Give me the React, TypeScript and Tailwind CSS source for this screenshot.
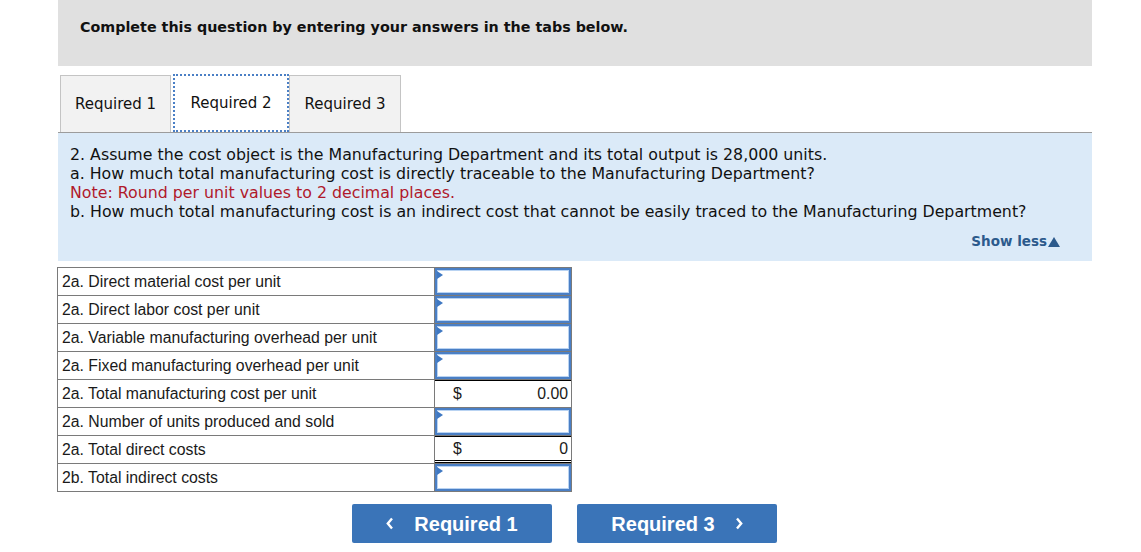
import React from "react";

const tahoma = "font-['DejaVu_Sans',Verdana,sans-serif]";

type Row = { label: string; total?: string; kind?: "single" | "double" };

const rows: Row[] = [
  { label: "2a. Direct material cost per unit" },
  { label: "2a. Direct labor cost per unit" },
  { label: "2a. Variable manufacturing overhead per unit" },
  { label: "2a. Fixed manufacturing overhead per unit" },
  { label: "2a. Total manufacturing cost per unit", total: "0.00", kind: "single" },
  { label: "2a. Number of units produced and sold" },
  { label: "2a. Total direct costs", total: "0", kind: "double" },
  { label: "2b. Total indirect costs" },
];

function InputCell() {
  return (
    <div className="relative h-full w-full border-2 border-[#4a7fc5] bg-white shadow-[inset_0_0_0_1px_#b9d3f2]">
      <svg className="absolute left-0 top-[1px]" width="6" height="8" viewBox="0 0 6 8">
        <path d="M0 0 L6 4 L0 8 Z" fill="#3f78c2" />
      </svg>
    </div>
  );
}

function App() {
  return (
    <div className="w-[1141px] h-[552px] bg-white overflow-hidden">
      <div className="ml-[58px] w-[1034px]">
        <div className={`h-[66px] bg-[#e0e0e0] pl-[22px] pt-[17px] text-[14.3px] font-bold text-[#111] ${tahoma}`}>
          Complete this question by entering your answers in the tabs below.
        </div>

        <div className={`mt-[8px] flex items-end pl-[2px] text-[15px] text-[#111] ${tahoma}`}>
          <div className="h-[57px] w-[111px] border border-b-0 border-[#c4c4c4] bg-[#f2f2f2] flex items-center justify-center">
            Required 1
          </div>
          <div className="ml-[2px] h-[58px] w-[116px] border-2 border-dotted border-[#4a7fc5] bg-white flex items-center justify-center pt-[1px]">
            Required 2
          </div>
          <div className="h-[57px] w-[112px] border border-b-0 border-[#c4c4c4] bg-[#f2f2f2] flex items-center justify-center">
            Required 3
          </div>
        </div>

        <div className={`h-[129px] border-t border-[#9c9c9c] bg-[#dbeaf8] pl-[12px] pr-[32px] pt-[12px] text-[15.8px] leading-[19px] text-[#111] ${tahoma}`}>
          <p>2. Assume the cost object is the Manufacturing Department and its total output is 28,000 units.</p>
          <p>a. How much total manufacturing cost is directly traceable to the Manufacturing Department?</p>
          <p className="text-[#b0192b]">Note: Round per unit values to 2 decimal places.</p>
          <p>b. How much total manufacturing cost is an indirect cost that cannot be easily traced to the Manufacturing Department?</p>
          <div className="mt-[11px] flex justify-end items-center text-[13.5px] font-bold text-[#2c5a8c]">
            Show less
            <svg className="ml-[1px]" width="12" height="10" viewBox="0 0 12 10">
              <path d="M6 0 L12 10 L0 10 Z" fill="#2c5a8c" />
            </svg>
          </div>
        </div>
      </div>

      <div className="ml-[57px] mt-[6px] w-[515px] border-x border-t border-[#7a7a7a] font-['Liberation_Sans',Arial,sans-serif] text-[15.8px] text-[#1a1a1a]">
        {rows.map((r, i) => (
          <div key={i} className="flex h-[28px] border-b border-[#7a7a7a]">
            <div className="w-[377px] shrink-0 border-r border-[#7a7a7a] pl-[4px] flex items-center">{r.label}</div>
            <div className="flex-1">
              {r.total ? (
                <div
                  className={`flex h-full items-center justify-between pl-[18px] pr-[3px] border-t border-black ${
                    r.kind === "double" ? "border-b-[3px] border-double border-b-black" : ""
                  }`}
                >
                  <span>$</span>
                  <span>{r.total}</span>
                </div>
              ) : (
                <InputCell />
              )}
            </div>
          </div>
        ))}
      </div>

      <div className="ml-[352px] mt-[12px] flex gap-[25px] font-['Liberation_Sans',Arial,sans-serif] text-[20px] font-bold text-white">
        <button className="h-[39px] w-[200px] rounded-[2px] bg-[#3a74b8] flex items-center justify-center gap-[20px]">
          <svg width="8" height="13" viewBox="0 0 8 13">
            <path d="M6 1.5 L1.8 6.5 L6 11.5" fill="none" stroke="white" strokeWidth="2.4" />
          </svg>
          <span>Required 1</span>
        </button>
        <button className="h-[39px] w-[200px] rounded-[2px] bg-[#3a74b8] flex items-center justify-center gap-[20px]">
          <span>Required 3</span>
          <svg width="8" height="13" viewBox="0 0 8 13">
            <path d="M2 1.5 L6.2 6.5 L2 11.5" fill="none" stroke="white" strokeWidth="2.4" />
          </svg>
        </button>
      </div>
    </div>
  );
}

export default App;
